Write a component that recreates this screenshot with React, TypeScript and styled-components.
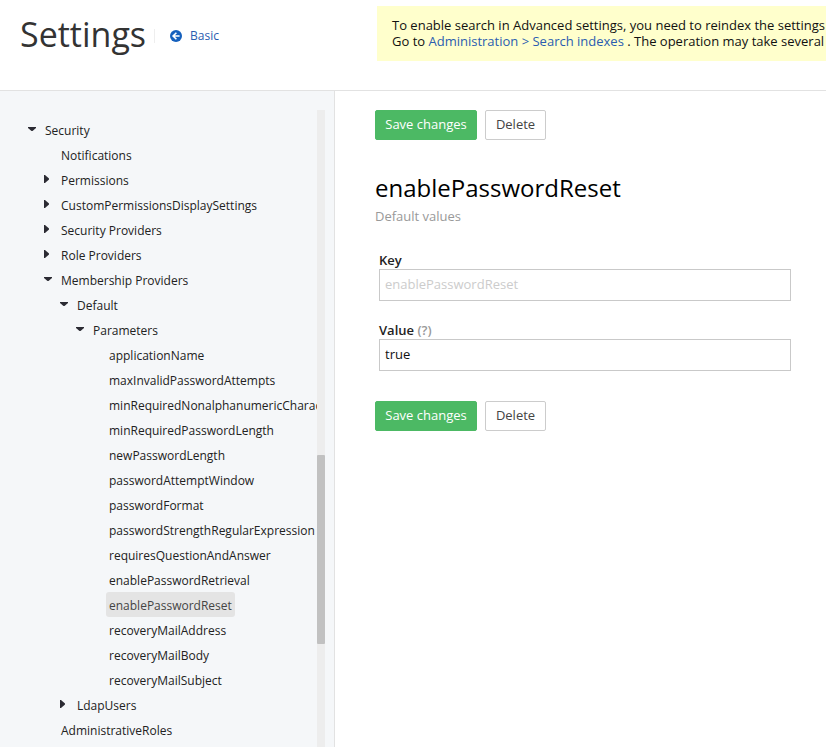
import React, { useState } from "react";
import styled, { createGlobalStyle } from "styled-components";

const GlobalStyle = createGlobalStyle`
  *, *::before, *::after { box-sizing: border-box; }
  body {
    margin: 0;
    background: #fff;
    color: #222;
    font: 13px/16px "Open Sans", "Noto Sans", sans-serif;
    overflow: hidden;
  }
  button, input { font: inherit; }
`;

const Page = styled.div`
  display: flex;
  flex-direction: column;
  min-height: 100vh;
`;

const Header = styled.header`
  display: flex;
  align-items: flex-start;
  min-height: 91px;
  padding-left: 20px;
  border-bottom: 1px solid #e2e2e2;
`;

const HeaderStart = styled.div`
  display: flex;
  flex: none;
  align-items: center;
  width: 357px;
  height: 68px;
`;

const Title = styled.h1`
  margin: 0;
  font-size: 34px;
  font-weight: 400;
  line-height: 48px;
  color: #333;
`;

const Divider = styled.span`
  width: 1px;
  height: 14px;
  margin: 4px 15px 0 8px;
  background: #eee;
`;

const Link = styled.a`
  color: #2a5db0;
  text-decoration: none;
`;

const BackLink = styled(Link)`
  display: flex;
  align-items: center;
  gap: 8px;
  padding-top: 4px;
  font-size: 12px;
  svg { display: block; }
`;

const Notice = styled.p`
  flex: 1;
  min-width: 0;
  margin: 6px 0 0;
  padding: 11px 0 12px 15px;
  background: #ffffcc;
  color: #111;
  white-space: nowrap;
  overflow: hidden;
`;

const Body = styled.div`
  display: flex;
  flex: 1;
`;

const Sidebar = styled.aside`
  display: flex;
  flex: none;
  width: 335px;
  padding: 19px 9px 0 0;
  background: #f5f7f9;
  border-right: 1px solid #e2e2e2;
`;

const Tree = styled.ul`
  flex: 1;
  min-width: 0;
  margin: 0;
  padding: 7px 0 0 26px;
  list-style: none;
  overflow: hidden;
  font-size: 12px;
`;

const TreeItem = styled.li<{ $depth: number }>`
  display: flex;
  height: 25px;
  padding-left: ${(p) => p.$depth * 16}px;
`;

const Toggle = styled.span`
  display: flex;
  flex: none;
  justify-content: center;
  width: 12px;
  margin-right: 4px;
  padding-top: 8px;
`;

const Node = styled.button<{ $selected?: boolean }>`
  flex: none;
  height: 25px;
  padding: 2px 3px 0;
  border: 0;
  border-radius: 3px;
  background: ${(p) => (p.$selected ? "#e4e4e4" : "transparent")};
  color: ${(p) => (p.$selected ? "#444" : "#222")};
  white-space: nowrap;
  cursor: pointer;
`;

const Track = styled.div`
  display: flex;
  flex: none;
  flex-direction: column;
  width: 8px;
  background: #ededed;
  &::before { content: ""; flex: 345; }
  &::after { content: ""; flex: 103; }
`;

const Thumb = styled.div`
  flex: 189;
  border-radius: 1px;
  background: #c1c1c1;
`;

const Main = styled.main`
  flex: 1;
  min-width: 0;
  padding: 19px 35px 0 40px;
`;

const Actions = styled.div`
  display: flex;
  gap: 8px;
`;

const Button = styled.button<{ $primary?: boolean }>`
  min-width: ${(p) => (p.$primary ? 102 : 61)}px;
  height: 30px;
  padding: 0 9px 2px;
  border: 1px solid ${(p) => (p.$primary ? "#4cb964" : "#ccc")};
  border-radius: 2px;
  background: ${(p) => (p.$primary ? "#4cb964" : "#fff")};
  color: ${(p) => (p.$primary ? "#fff" : "#444")};
  cursor: pointer;
`;

const Heading = styled.h2`
  margin: 31px 0 0;
  font-size: 24px;
  font-weight: 400;
  line-height: 34px;
  color: #000;
`;

const Subheading = styled.p`
  margin: 2px 0 26px;
  line-height: 18px;
  color: #999;
`;

const Form = styled.form`
  display: flex;
  flex-direction: column;
  gap: 30px;
`;

const Fields = styled.div`
  display: flex;
  flex-direction: column;
  gap: 20px;
  padding-left: 4px;
`;

const Field = styled.div`
  display: flex;
  flex-direction: column;
  label { font-weight: 600; line-height: 18px; }
`;

const Hint = styled.span`
  color: #999;
`;

const TextInput = styled.input`
  width: 100%;
  height: 32px;
  padding: 0 5px 2px;
  border: 1px solid #c9c9c9;
  border-radius: 0;
  background: #fff;
  color: #111;
  outline: 0;
  &:disabled { color: #ccc; }
`;

type NodeData = { label: string; depth: number; state?: "open" | "closed" };

const nodes: NodeData[] = [
  { label: "Security", depth: 0, state: "open" },
  { label: "Notifications", depth: 1 },
  { label: "Permissions", depth: 1, state: "closed" },
  { label: "CustomPermissionsDisplaySettings", depth: 1, state: "closed" },
  { label: "Security Providers", depth: 1, state: "closed" },
  { label: "Role Providers", depth: 1, state: "closed" },
  { label: "Membership Providers", depth: 1, state: "open" },
  { label: "Default", depth: 2, state: "open" },
  { label: "Parameters", depth: 3, state: "open" },
  { label: "applicationName", depth: 4 },
  { label: "maxInvalidPasswordAttempts", depth: 4 },
  { label: "minRequiredNonalphanumericCharacters", depth: 4 },
  { label: "minRequiredPasswordLength", depth: 4 },
  { label: "newPasswordLength", depth: 4 },
  { label: "passwordAttemptWindow", depth: 4 },
  { label: "passwordFormat", depth: 4 },
  { label: "passwordStrengthRegularExpression", depth: 4 },
  { label: "requiresQuestionAndAnswer", depth: 4 },
  { label: "enablePasswordRetrieval", depth: 4 },
  { label: "enablePasswordReset", depth: 4 },
  { label: "recoveryMailAddress", depth: 4 },
  { label: "recoveryMailBody", depth: 4 },
  { label: "recoveryMailSubject", depth: 4 },
  { label: "LdapUsers", depth: 2, state: "closed" },
  { label: "AdministrativeRoles", depth: 1 },
];

function Arrow({ state }: { state: "open" | "closed" }) {
  return (
    <svg width="8" height="8" viewBox="0 0 8 8" fill="#2b2b33" aria-hidden="true">
      <path d={state === "open" ? "M0 2h8v1L4.5 6h-1L0 3z" : "M0 0h1l4 3.5v1L1 8H0z"} />
    </svg>
  );
}

function BackIcon() {
  return (
    <svg width="12" height="12" viewBox="0 0 12 12" aria-hidden="true">
      <circle cx="6" cy="6" r="6" fill="#1560bd" />
      <path d="M6.4 2.7 3.1 6l3.3 3.3M3.3 6H9.6" fill="none" stroke="#fff" strokeWidth="1.6" />
    </svg>
  );
}

function FormActions() {
  return (
    <Actions>
      <Button type="button" $primary>Save changes</Button>
      <Button type="button">Delete</Button>
    </Actions>
  );
}

export default function App() {
  const [selected, setSelected] = useState("enablePasswordReset");
  const [value, setValue] = useState("true");

  return (
    <Page>
      <GlobalStyle />
      <Header>
        <HeaderStart>
          <Title>Settings</Title>
          <Divider />
          <BackLink href="#basic">
            <BackIcon />
            Basic
          </BackLink>
        </HeaderStart>
        <Notice>
          To enable search in Advanced settings, you need to reindex the settings
          <br />
          Go to <Link href="#indexes">Administration &gt; Search indexes</Link> . The operation may take several
        </Notice>
      </Header>
      <Body>
        <Sidebar>
          <Tree>
            {nodes.map((n) => (
              <TreeItem key={n.label} $depth={n.depth}>
                <Toggle>{n.state && <Arrow state={n.state} />}</Toggle>
                <Node type="button" $selected={n.label === selected} onClick={() => setSelected(n.label)}>
                  {n.label}
                </Node>
              </TreeItem>
            ))}
          </Tree>
          <Track>
            <Thumb />
          </Track>
        </Sidebar>
        <Main>
          <FormActions />
          <Heading>enablePasswordReset</Heading>
          <Subheading>Default values</Subheading>
          <Form onSubmit={(e) => e.preventDefault()}>
            <Fields>
              <Field>
                <label htmlFor="key">Key</label>
                <TextInput id="key" value="enablePasswordReset" disabled readOnly />
              </Field>
              <Field>
                <label htmlFor="value">
                  Value <Hint>(?)</Hint>
                </label>
                <TextInput id="value" value={value} onChange={(e) => setValue(e.target.value)} />
              </Field>
            </Fields>
            <FormActions />
          </Form>
        </Main>
      </Body>
    </Page>
  );
}
